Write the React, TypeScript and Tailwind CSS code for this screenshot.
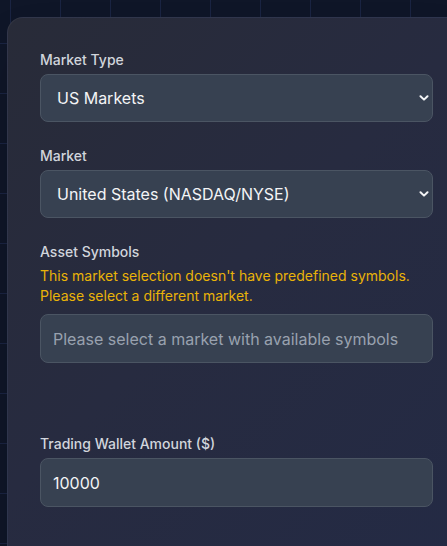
import React, { useState } from "react";

const Chevron = () => (
  <svg
    className="pointer-events-none absolute right-[4px] top-1/2 -translate-y-1/2 w-[10px] h-[6px] text-gray-100"
    viewBox="0 0 10 6"
    fill="none"
    stroke="currentColor"
    strokeWidth="2"
    strokeLinecap="round"
    strokeLinejoin="round"
  >
    <path d="M1.5 1.2 5 4.6 8.5 1.2" />
  </svg>
);

interface SelectProps {
  value: string;
  options: string[];
  onChange: (v: string) => void;
}

const SelectBox = ({ value, options, onChange }: SelectProps) => (
  <div className="relative">
    <select
      value={value}
      onChange={(e) => onChange(e.target.value)}
      className="appearance-none w-full h-12 pl-4 pr-8 rounded-lg bg-[#374151] border border-[#4b5563] text-base text-gray-100 outline-none"
    >
      {options.map((o) => (
        <option key={o}>{o}</option>
      ))}
    </select>
    <Chevron />
  </div>
);

const Label = ({ children }: { children: React.ReactNode }) => (
  <label className="block mb-1 text-sm leading-5 font-medium text-gray-300">
    {children}
  </label>
);

export default function App() {
  const [marketType, setMarketType] = useState("US Markets");
  const [market, setMarket] = useState("United States (NASDAQ/NYSE)");
  const [wallet, setWallet] = useState("10000");

  return (
    <div
      className="w-full h-[546px] overflow-hidden bg-[#0f1628] bg-[linear-gradient(to_right,#1a2442_1px,transparent_1px),linear-gradient(to_bottom,#1a2442_1px,transparent_1px)] bg-[size:50px_50px] bg-[position:10px_43px] pl-[7px] pt-[17px]"
      style={{ fontFamily: "Inter, 'Noto Sans', sans-serif" }}
    >
      <div className="w-[459px] h-[600px] rounded-2xl border border-white/5 bg-[linear-gradient(135deg,#282b38_0%,#272b40_45%,#232a45_100%)] p-8 shadow-2xl">
        <div>
          <Label>Market Type</Label>
          <SelectBox
            value={marketType}
            options={["US Markets", "Crypto", "Forex"]}
            onChange={setMarketType}
          />
        </div>

        <div className="mt-6">
          <Label>Market</Label>
          <SelectBox
            value={market}
            options={["United States (NASDAQ/NYSE)"]}
            onChange={setMarket}
          />
        </div>

        <div className="mt-6">
          <Label>Asset Symbols</Label>
          <p className="mb-2 text-sm leading-5 text-[#eab308]">
            This market selection doesn't have predefined symbols.
            <br />
            Please select a different market.
          </p>
          <input
            disabled
            placeholder="Please select a market with available symbols"
            className="w-full h-[49px] px-3 rounded-lg bg-[#374151] border border-[#4b5563] text-base text-gray-100 placeholder:text-gray-400 outline-none"
          />
        </div>

        <div className="mt-[71px]">
          <Label>Trading Wallet Amount ($)</Label>
          <input
            type="number"
            value={wallet}
            onChange={(e) => setWallet(e.target.value)}
            className="w-full h-[49px] px-3 rounded-lg bg-[#374151] border border-[#4b5563] text-base text-gray-100 outline-none [appearance:textfield]"
          />
        </div>
      </div>
    </div>
  );
}
